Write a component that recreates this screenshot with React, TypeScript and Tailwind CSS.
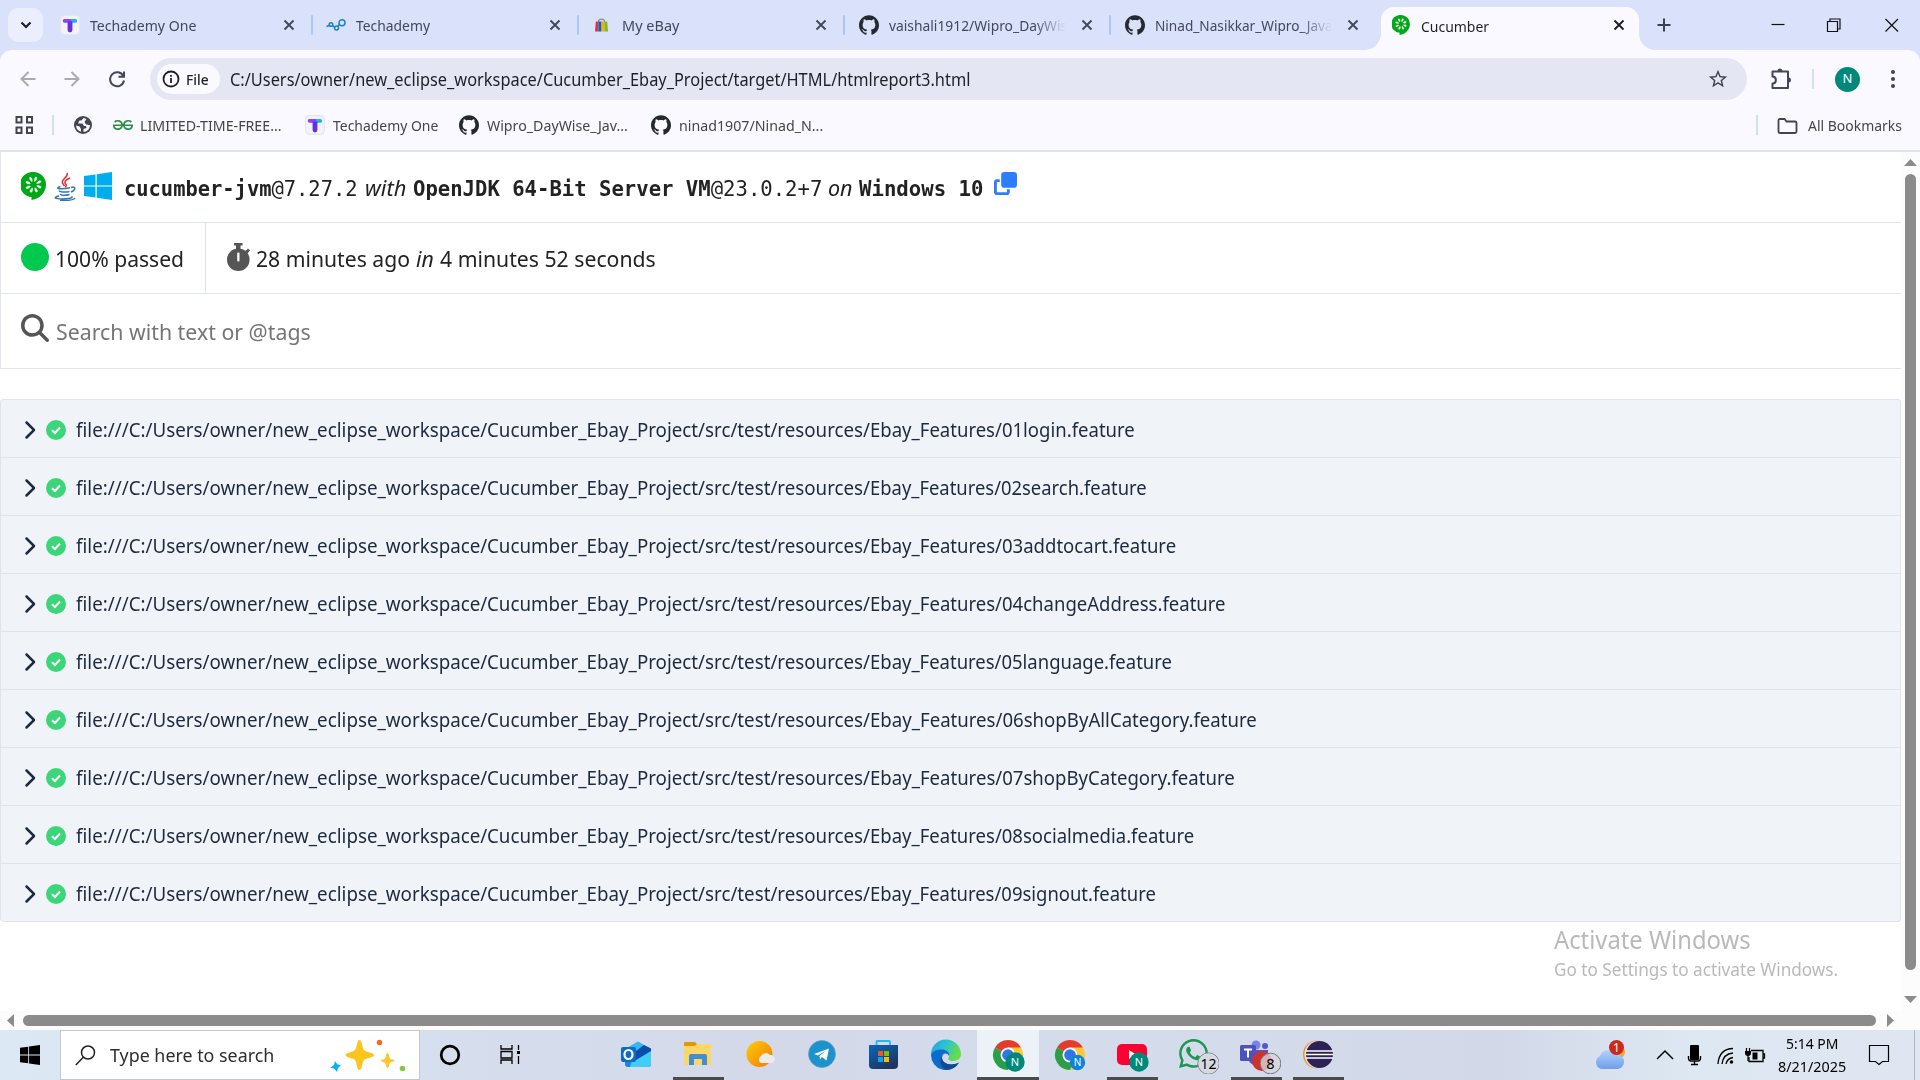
import React, { useLayoutEffect, useRef, useState } from "react";
import { SiGithub, SiGeeksforgeeks } from "react-icons/si";
import { FaMagnifyingGlass, FaClone, FaChevronRight } from "react-icons/fa6";
import { FaWhatsapp } from "react-icons/fa";
import { MdStarBorder } from "react-icons/md";

/** One line of text squeezed or stretched to the width that its class gives. */
function Fit({ className = "", children }: { className?: string; children: React.ReactNode }) {
  const outer = useRef<HTMLSpanElement>(null);
  const inner = useRef<HTMLSpanElement>(null);
  const [scale, setScale] = useState(1);
  useLayoutEffect(() => {
    if (!outer.current || !inner.current) return;
    setScale(outer.current.clientWidth / inner.current.offsetWidth);
  }, []);
  return (
    <span ref={outer} className={`inline-block shrink-0 whitespace-nowrap ${className}`}>
      <span ref={inner} className="inline-block origin-left" style={{ transform: `scaleX(${scale})` }}>
        {children}
      </span>
    </span>
  );
}

const seedAngles = [20, 65, 110, 155, 200, 245, 290, 335];

function Cucumber({ width, height }: { width: number; height: number }) {
  return (
    <svg width={width} height={height} viewBox="0 0 25 28" className="shrink-0">
      <path d="M12.500 0A12.500 12.500 0 0 1 25 12.500C25 20 19 27 10.500 28V25A12.500 12.500 0 0 1 12.500 0Z" fill="#00a818" />
      {seedAngles.map((a) => (
        <path key={a} d="M12.500 9.300C11.200 8 11 4.600 12.500 4.600C14 4.600 13.800 8 12.500 9.300Z" fill="#fff" stroke="#fff" strokeWidth=".4" transform={`rotate(${a} 12.500 12.700)`} />
      ))}
    </svg>
  );
}

function TechademyOne() {
  return (
    <svg width="20" height="20" viewBox="0 0 20 20" className="shrink-0">
      <rect x=".5" y=".5" width="19" height="19" rx="4" fill="#f3f2f4" stroke="#e6e5ea" />
      <path d="M4.500 4H11L13 7.800H4.800A1.9 1.900 0 0 1 4.500 4Z" fill="#8a45f5" />
      <path d="M10.500 4H15.300A1.9 1.900 0 0 1 15.300 7.800H12.500Z" fill="#18b4f5" />
      <path d="M7.600 6.500H12.400V15A2.400 2.400 0 0 1 7.600 15Z" fill="#6432dc" />
    </svg>
  );
}

function Techademy() {
  return (
    <svg width="20" height="12" viewBox="0 0 20 12" className="shrink-0" fill="none" stroke="#1d7fc4" strokeWidth="1.500">
      <path d="M.5 7.500L3 6.500" />
      <circle cx="5" cy="5.500" r="1.800" />
      <path d="M6.500 6.500L9 8.500" />
      <circle cx="10.500" cy="9" r="2" />
      <path d="M11.500 7.500L13.500 5.500" />
      <circle cx="16" cy="3.800" r="3" />
    </svg>
  );
}

function EbayBag() {
  return (
    <svg width="13" height="14" viewBox="0 0 13 14" className="-ml-[2px] shrink-0">
      <path d="M3.500 4C3.500 .2 9.500 .2 9.500 4" fill="none" stroke="#8a8d96" strokeWidth="1.200" />
      <path d="M.8 3.500H3.500V13.500H0Z" fill="#e53238" />
      <path d="M3.500 3.500H6.500V13.500H3.500Z" fill="#0064d2" />
      <path d="M6.500 3.500H9.500V13.500H6.500Z" fill="#f5af02" />
      <path d="M9.500 3.500H12.200L13 13.500H9.500Z" fill="#86b817" />
    </svg>
  );
}

function Cross({ dark }: { dark?: boolean }) {
  return (
    <svg width="12" height="12" viewBox="0 0 12 12" className="shrink-0">
      <path d="M1.500 1.500L10.500 10.500M10.500 1.500L1.500 10.500" stroke={dark ? "#1f1f28" : "#434759"} strokeWidth="1.900" />
    </svg>
  );
}

function Sep() {
  return <div className="h-5 w-[2px] shrink-0 rounded bg-[#a8c7fa]" />;
}

function Tab({ icon, children, sep = true }: { icon: React.ReactNode; children: React.ReactNode; sep?: boolean }) {
  return (
    <div className="flex w-[266px] shrink-0 items-center pl-[13px]">
      <div className="flex w-5 shrink-0 justify-center">{icon}</div>
      <div className="ml-[10px] flex w-[178px] shrink-0 text-[15px] leading-5 text-[#43475a]">{children}</div>
      <div className="ml-[15px]">
        <Cross />
      </div>
      <div className="ml-[16px]">{sep && <Sep />}</div>
    </div>
  );
}

function TabStrip() {
  return (
    <div className="flex h-[50px] shrink-0 items-stretch bg-[#dae1fa]">
      <div className="ml-2 mr-1 mt-2 flex h-[34px] w-[35px] shrink-0 items-center justify-center rounded-[10px] bg-[#ebeffd]">
        <svg width="12" height="8" viewBox="0 0 12 8" fill="none" stroke="#1f1f28" strokeWidth="2.200">
          <path d="M1.500 1.500L6 6L10.500 1.500" />
        </svg>
      </div>
      <Tab icon={<TechademyOne />}>
        <Fit className="w-[106px]">Techademy One</Fit>
      </Tab>
      <Tab icon={<Techademy />}>
        <Fit className="w-[74px]">Techademy</Fit>
      </Tab>
      <Tab icon={<EbayBag />}>
        <Fit className="w-[57px]">My eBay</Fit>
      </Tab>
      <Tab icon={<SiGithub size={20} color="#24292f" className="translate-x-px" />}>
        <span className="[mask-image:linear-gradient(to_right,black_82%,transparent)]">
          <Fit className="w-[178px] pl-px">vaishali1912/Wipro_DayWis</Fit>
        </span>
      </Tab>
      <Tab sep={false} icon={<SiGithub size={20} color="#24292f" className="translate-x-px" />}>
        <span className="[mask-image:linear-gradient(to_right,black_82%,transparent)]">
          <Fit className="w-[178px] pl-px">Ninad_Nasikkar_Wipro_Java</Fit>
        </span>
      </Tab>
      <div className="-ml-[12px] flex w-[290px] shrink-0 items-end">
        <div className="h-4 w-4 bg-[radial-gradient(circle_at_top_left,transparent_15.500px,#faf9ff_16px)]" />
        <div className="flex h-[43px] w-[258px] items-center rounded-t-[13px] bg-[#faf9ff] pb-[7px] pl-[11px]">
          <Cucumber width={18} height={20} />
          <Fit className="ml-[11px] mt-[1px] w-[68px] text-[15px] leading-5 text-[#1f1f28]">Cucumber</Fit>
          <div className="-mt-px ml-[124px] flex">
            <Cross dark />
          </div>
        </div>
        <div className="h-4 w-4 bg-[radial-gradient(circle_at_top_right,transparent_15.500px,#faf9ff_16px)]" />
      </div>
      <svg width="14" height="14" viewBox="0 0 14 14" className="ml-[2px] mt-[18px] shrink-0">
        <path d="M7 .5V13.500M.5 7H13.500" stroke="#3c4152" strokeWidth="2" />
      </svg>
      <div className="ml-auto flex items-center pb-px pr-[21px]">
        <svg width="128" height="16" viewBox="0 0 128 16" fill="none" stroke="#111" strokeWidth="1.200">
          <path d="M.5 7.500H13.500" />
          <path d="M56.500 4.500H66.500V14.500H56.500ZM59 4.500V2H69V12H66.500" />
          <path d="M114.500 2L127 14.500M127 2L114.500 14.500" />
        </svg>
      </div>
    </div>
  );
}

function Toolbar() {
  return (
    <div className="shrink-0 bg-[#dae1fa]">
      <div className="flex h-[51px] items-center rounded-t-xl bg-[#faf9ff] pt-[7px]">
        <svg width="106" height="18" viewBox="0 0 106 18" fill="none" strokeWidth="2" className="ml-5 shrink-0">
          <path d="M15.500 9H1.500M8.500 2L1.500 9L8.500 16" stroke="#a9aab2" />
          <path d="M44.500 9H58.500M51.500 2L58.500 9L51.500 16" stroke="#a9aab2" />
          <path d="M103.300 6A7 7 0 1 0 104 10.500M104 1.500V6.800H98.500" stroke="#434759" />
        </svg>
        <div className="ml-[24px] flex h-[42px] w-[1597px] shrink-0 items-center rounded-full bg-[#e4e7f3] pl-[7px] pr-[18px]">
          <div className="flex h-[30px] w-[63px] items-center rounded-full bg-[#faf9ff] pl-[5px]">
            <svg width="18" height="18" viewBox="0 0 18 18" fill="none" stroke="#1f1f28" strokeWidth="1.800" className="shrink-0">
              <circle cx="9" cy="9" r="7.500" />
              <path d="M9 8V13M9 5V6.800" />
            </svg>
            <Fit className="ml-[6px] w-[23px] text-[15px] font-medium leading-5 text-[#1f1f28]">File</Fit>
          </div>
          <Fit className="ml-[10px] w-[740px] text-[17.500px] text-[#1f1f28]">
            C:/Users/owner/new_eclipse_workspace/Cucumber_Ebay_Project/target/HTML/htmlreport3.html
          </Fit>
          <MdStarBorder className="ml-auto" size={22} color="#43444f" />
        </div>
        <svg width="21" height="22" viewBox="0 0 21 22" className="ml-[24px] shrink-0" fill="none" stroke="#434759" strokeWidth="2">
          <path d="M1.500 3.500H17V20H1.500V15.500C6 15.500 6 8.500 1.500 8.500Z" strokeLinejoin="round" />
          <path d="M6.500 3A2.500 2.500 0 0 1 11.500 3ZM17.500 9.500A2.500 2.500 0 0 1 17.500 14.500Z" fill="#434759" stroke="none" />
        </svg>
        <div className="ml-[20px] h-5 w-[2px] bg-[#d0dffb]" />
        <div className="ml-[21px] flex size-[25px] items-center justify-center rounded-full bg-[#00897b] text-[13px] text-white">N</div>
        <svg width="6" height="20" viewBox="0 0 6 20" fill="#43444f" className="ml-[30px]">
          <circle cx="3" cy="3" r="2" />
          <circle cx="3" cy="10" r="2" />
          <circle cx="3" cy="17" r="2" />
        </svg>
      </div>
    </div>
  );
}

function Bookmarks() {
  return (
    <div className="flex h-[49px] shrink-0 items-center bg-[#faf9ff] pb-[2px] text-[15px] leading-5 text-[#43444f]">
      <svg width="19" height="18" viewBox="0 0 19 18" fill="none" stroke="#43444f" strokeWidth="2" className="ml-[15px] mt-px shrink-0">
        <path d="M1.500 1H6.500V6.500H1.500ZM12 1H17V6.500H12ZM1.500 11.500H6.500V17H1.500ZM12 11.500H17V17H12Z" />
      </svg>
      <div className="ml-[18px] h-5 w-[2px] bg-[#d0dffb]" />
      <svg width="18" height="18" viewBox="0 0 18 18" className="ml-[20px] shrink-0">
        <circle cx="9" cy="9" r="9" fill="#43444f" />
        <path d="M9.500 2L7.500 4.500H5.500L4 7.500H8.500L10 10H12L12.500 12L9.500 13V16C13 16 16 13 16 9C14.500 9.500 13.500 8.500 12 8.500L10.500 6L12.500 3Z" fill="#faf9ff" />
        <path d="M2 9.500L5.500 10.500L7 13V15.700A7 7 0 0 1 2 9.500Z" fill="#faf9ff" />
      </svg>
      <SiGeeksforgeeks size={20} color="#2f8d46" className="ml-[21px] shrink-0" />
      <Fit className="ml-[7px] w-[142px]">LIMITED-TIME-FREE...</Fit>
      <div className="ml-[23px]">
        <TechademyOne />
      </div>
      <Fit className="ml-[8px] w-[105px]">Techademy One</Fit>
      <SiGithub size={20} color="#24292f" className="ml-[21px] shrink-0" />
      <Fit className="ml-[8px] w-[141px]">Wipro_DayWise_Jav...</Fit>
      <SiGithub size={20} color="#24292f" className="ml-[23px] shrink-0" />
      <Fit className="ml-[8px] w-[144px]">ninad1907/Ninad_N...</Fit>
      <div className="ml-auto h-5 w-[2px] bg-[#d0dffb]" />
      <svg width="21" height="16" viewBox="0 0 21 16" fill="none" stroke="#43444f" strokeWidth="1.800" className="ml-[19px] mt-0.5">
        <path d="M1.500 2.500Q1.500 1 3 1H7.500L9.500 3.500H18Q19.500 3.500 19.500 5V13.500Q19.500 15 18 15H3Q1.500 15 1.500 13.500Z" />
      </svg>
      <Fit className="ml-[10px] mr-[18px] w-[94px]">All Bookmarks</Fit>
    </div>
  );
}

function Java() {
  return (
    <svg width="22" height="29" viewBox="0 0 22 29" fill="none" className="shrink-0">
      <path d="M13 1C15 5 6.500 7.500 8.500 11C9 12 10 13 10.300 14M16 6C11 8 9.500 10 12 12.500C12.700 13.200 12 14.500 11 15" stroke="#e32c2e" strokeWidth="1.500" />
      <path
        d="M6.500 14.500C-1 17 8 17.500 16 15.800M5.500 18.500C4 20 11 20.500 15.500 19.500M6.500 21.800C6 23.500 11.500 23.800 15.500 22.500M17 15.500C22.500 13.500 21.500 18.500 17 20M5 24C-1.500 25.500 1 27 8 27C14 27 20 26 17.500 24.300M6 28.300C13 29 20 28 21 26"
        stroke="#3174b9"
        strokeWidth="1.400"
      />
    </svg>
  );
}

function Stopwatch() {
  return (
    <svg width="23" height="28" viewBox="0 0 23 28" className="ml-[21px] mt-[20px] shrink-0">
      <path d="M7 0H15.500V2.500H13.500V6H9V2.500H7Z" fill="#555" />
      <path d="M18 8.500L21 5.500L23 7.500L20 11Z" fill="#555" />
      <circle cx="11.300" cy="16.700" r="11.300" fill="#555" />
      <rect x="10.200" y="9.500" width="2.300" height="9" rx="1" fill="#fff" />
    </svg>
  );
}

function WindowsLogo({ size, color }: { size: number; color: string }) {
  return (
    <svg width={size} height={size} viewBox="0 0 28 28" fill={color} className="shrink-0">
      <path d="M0 4L11.500 2.400V13.400H0ZM12.700 2.200L28 0V13.400H12.700ZM0 14.600H11.500V25.600L0 24ZM12.700 14.600H28V28L12.700 25.800Z" />
    </svg>
  );
}

const features = [
  { name: "01login", width: "w-[265px]" },
  { name: "02search", width: "w-[277px]" },
  { name: "03addtocart", width: "w-[306px]" },
  { name: "04changeAddress", width: "w-[356px]" },
  { name: "05language", width: "w-[302px]" },
  { name: "06shopByAllCategory", width: "w-[387px]" },
  { name: "07shopByCategory", width: "w-[365px]" },
  { name: "08socialmedia", width: "w-[324px]" },
  { name: "09signout", width: "w-[286px]" },
];

function Report() {
  const mono = "font-['DejaVu_Sans_Mono',monospace] text-[20.500px]";
  return (
    <div className="flex w-[1901px] flex-col text-[22.400px] text-[#222]">
      <div className="flex h-[71px] border-b border-l border-[#dfe5f0] pl-[20px] pt-[20px]">
        <Cucumber width={25} height={28} />
        <div className="ml-[8px]">
          <Java />
        </div>
        <div className="ml-[8px]">
          <WindowsLogo size={28} color="#00adef" />
        </div>
        <div className="-mt-px ml-[12px] flex h-[34px] items-baseline leading-[34px]">
          <Fit className={`w-[234px] ${mono}`}>
            <b>cucumber-jvm</b>@7.27.2
          </Fit>
          <Fit className="ml-[7px] w-[41px] italic">with</Fit>
          <Fit className={`ml-[7px] w-[409px] ${mono}`}>
            <b>OpenJDK 64-Bit Server VM</b>@23.0.2+7
          </Fit>
          <Fit className="ml-[6px] w-[25px] italic">on</Fit>
          <Fit className={`ml-[6px] w-[124px] ${mono}`}>
            <b>Windows 10</b>
          </Fit>
        </div>
        <FaClone size={23} color="#2b7fff" className="ml-[11px]" />
      </div>
      <div className="flex h-[71px] border-b border-l border-[#dfe5f0]">
        <div className="flex w-[205px] border-r border-[#dfe5f0] pl-[20px] pt-[20px]">
          <div className="size-[28px] rounded-full bg-[#00c950]" />
          <Fit className="ml-[6px] w-[129px] leading-[32px]">100% passed</Fit>
        </div>
        <Stopwatch />
        <div className="ml-[6px] flex items-baseline pt-[20px] leading-[32px]">
          <Fit className="w-[154px]">28 minutes ago</Fit>
          <Fit className="ml-[6px] w-[18px] italic">in</Fit>
          <Fit className="ml-[6px] w-[216px]">4 minutes 52 seconds</Fit>
        </div>
      </div>
      <div className="flex h-[75px] border-b border-l border-[#dfe5f0] pl-[20px] pt-[20px]">
        <FaMagnifyingGlass size={28} color="#555" />
        <Fit className="ml-[7px] w-[255px] leading-[36px] text-[#757575]">Search with text or @tags</Fit>
      </div>
      <div className="mt-[30px] flex flex-col rounded-[3px] border border-[#dfe5f0] bg-[#f0f4f9] text-[20px] text-[#1d293d]">
        {features.map((f, i) => (
          <div
            key={f.name}
            className={`flex h-[58px] items-center pl-[18px] pt-0.5 last:h-[57px] ${i < features.length - 1 ? "border-b border-[#dfe3ec]" : ""}`}
          >
            <FaChevronRight size={20} color="#1d293d" className="shrink-0" />
            <svg width="20" height="20" viewBox="0 0 20 20" className="ml-[7px] shrink-0">
              <circle cx="10" cy="10" r="10" fill="#3cd57a" />
              <path d="M6 10.300L8.900 13L14 7.500" fill="none" stroke="#fff" strokeWidth="2" />
            </svg>
            <Fit className="ml-[10px] w-[411px]">file:///C:/Users/owner/new_eclipse_workspace/</Fit>
            <Fit className="w-[383px]">Cucumber_Ebay_Project/src/test/resources/</Fit>
            <Fit className={f.width}>Ebay_Features/{f.name}.feature</Fit>
          </div>
        ))}
      </div>
      <div className="-mt-px ml-[1554px] flex flex-col text-[#b9b9b9]">
        <Fit className="w-[197px] text-[25px] leading-[36px]">Activate Windows</Fit>
        <Fit className="w-[284px] text-[18px] leading-[24px]">Go to Settings to activate Windows.</Fit>
      </div>
    </div>
  );
}

function Chrome({ children }: { children?: React.ReactNode }) {
  return (
    <svg width="34" height="34" viewBox="0 0 34 34">
      <path d="M17 17L4 9.500A15 15 0 0 1 30 9.500Z" fill="#e33b2e" />
      <path d="M17 17L4 9.500A15 15 0 0 0 17 32L24 19Z" fill="#2c9e47" />
      <path d="M17 17L17 9.500H30A15 15 0 0 1 17 32L23 20Z" fill="#fcc934" />
      <circle cx="17" cy="17" r="7.500" fill="#fff" />
      <circle cx="17" cy="17" r="5.800" fill="#2f77e8" />
      {children}
    </svg>
  );
}

function Badge({ cx, cy, r, fill, label, size, color = "#fff", stroke }: { cx: number; cy: number; r: number; fill: string; label: string; size: number; color?: string; stroke?: string }) {
  return (
    <g>
      <circle cx={cx} cy={cy} r={r} fill={fill} stroke={stroke} />
      <text x={cx} y={cy + size * 0.36} textAnchor="middle" fontSize={size} fill={color} stroke="none">
        {label}
      </text>
    </g>
  );
}

const apps: { id: string; open?: boolean; active?: boolean; icon: React.ReactNode }[] = [
  {
    id: "outlook",
    icon: (
      <svg width="32" height="32" viewBox="0 0 32 32">
        <path d="M5 10L18 3L31 10V25Q31 28 28 28H8Q5 28 5 25Z" fill="#1a86d8" />
        <path d="M7 9L18 2.500L24 6L13 14Z" fill="#35b8f1" />
        <path d="M12 21L31 10V25Q31 28 28 28H10Z" fill="#41cdf5" />
        <path d="M14 14L24 6L31 9.500V12L16 21Z" fill="#0c4cab" />
        <rect x="1" y="8" width="15" height="15" rx="2" fill="#0f6cc4" />
        <ellipse cx="8.500" cy="15.500" rx="4" ry="4.500" fill="none" stroke="#fff" strokeWidth="2.200" />
      </svg>
    ),
  },
  {
    id: "files",
    open: true,
    icon: (
      <svg width="32" height="32" viewBox="0 0 32 32">
        <path d="M2 4Q2 3 3 3H13L15 5V7H2Z" fill="#dd9a05" />
        <path d="M2 7H13L15 5H29V26H2Z" fill="#fcd667" />
        <path d="M7 26V17Q7 15 9 15H23Q25 15 25 17V26H20V20H12V26Z" fill="#3f8fd6" />
      </svg>
    ),
  },
  {
    id: "weather",
    icon: (
      <svg width="32" height="32" viewBox="0 0 32 32">
        <defs>
          <linearGradient id="sun" x2="1" y2="1">
            <stop stopColor="#ffcb05" />
            <stop offset="1" stopColor="#f07b05" />
          </linearGradient>
        </defs>
        <circle cx="15.500" cy="15" r="13" fill="url(#sun)" />
        <path d="M17 24A4 4 0 0 1 17 17A5.500 5.500 0 0 1 26 16A4 4 0 0 1 27 24Z" fill="#ececee" />
      </svg>
    ),
  },
  {
    id: "telegram",
    icon: (
      <svg width="32" height="32" viewBox="0 0 32 32">
        <circle cx="16" cy="15" r="13.500" fill="#1c93ce" stroke="#6a98b5" strokeWidth=".6" />
        <path d="M8 15L23 9.500L20.500 21.500L16 18L14 20.500L13.500 17L20 11.500L12 16.500Z" fill="#fff" />
      </svg>
    ),
  },
  {
    id: "store",
    icon: (
      <svg width="32" height="32" viewBox="0 0 32 32">
        <defs>
          <linearGradient id="bag" x2=".6" y2="1">
            <stop stopColor="#0767bd" />
            <stop offset="1" stopColor="#20345d" />
          </linearGradient>
        </defs>
        <path d="M8.500 7V3Q8.500 2 9.500 2H21Q22 2 22 3V7" fill="none" stroke="#29b4f0" strokeWidth="1.800" />
        <path d="M1 6H30V26Q30 30 26 30H5Q1 30 1 26Z" fill="url(#bag)" />
        <path d="M10 12H15V17H10Z" fill="#f35325" />
        <path d="M16 12H21V17H16Z" fill="#81bc06" />
        <path d="M10 18H15V23H10Z" fill="#05a6f0" />
        <path d="M16 18H21V23H16Z" fill="#ffba08" />
      </svg>
    ),
  },
  {
    id: "edge",
    icon: (
      <svg width="32" height="32" viewBox="0 0 32 32">
        <defs>
          <linearGradient id="edgeTop" x2="1" y2=".4">
            <stop stopColor="#1f9fe0" />
            <stop offset=".5" stopColor="#2cc3d2" />
            <stop offset="1" stopColor="#66dd4b" />
          </linearGradient>
        </defs>
        <path d="M1 16A15 15 0 0 1 31 15C31 20 27 22 23 22C19 22 17 20 19 18C20 14 17 11 13 11C7 11 2 13 1 16Z" fill="url(#edgeTop)" />
        <path d="M1 16C2 12 7 10.500 12 10.500C17 10.500 20 14 19 17C18 14 12 13 12 19C12 24 20 28 29 23.500A15 15 0 0 1 1 16Z" fill="#0c6ccb" />
        <path d="M12 19C12 24 20 28 29 23.500A15 15 0 0 1 17 31C10 29 8 20 14 15.500C12.500 16.500 12 17.500 12 19Z" fill="#13498f" />
      </svg>
    ),
  },
  { id: "chrome", open: true, active: true, icon: <Chrome><Badge cx={24} cy={24} r={9.7} fill="#00897b" label="N" size={11} /></Chrome> },
  { id: "chrome-alt", icon: <Chrome><Badge cx={24.500} cy={24.500} r={7.7} fill="#0f84d6" label="N" size={10} /></Chrome> },
  {
    id: "youtube",
    open: true,
    icon: (
      <svg width="34" height="34" viewBox="0 0 34 34">
        <rect x="2" y="6" width="30" height="21" rx="5" fill="#ff0033" />
        <path d="M14 12L21 16.500L14 21Z" fill="#fff" />
        <Badge cx={24} cy={24} r={9.7} fill="#00897b" label="N" size={11} />
      </svg>
    ),
  },
  {
    id: "whatsapp",
    icon: (
      <svg width="50" height="38" viewBox="0 0 50 38">
        <FaWhatsapp x="8" y="1" size={33} color="#1f9552" />
        <Badge cx={39.500} cy={27.500} r={10.7} fill="#d6d9e2" stroke="#8b8d92" label="12" size={14} color="#000" />
      </svg>
    ),
  },
  {
    id: "teams",
    open: true,
    icon: (
      <svg width="50" height="38" viewBox="0 0 50 38">
        <circle cx="25" cy="9" r="4.500" fill="#7b83eb" />
        <circle cx="34" cy="10" r="3" fill="#5059c9" />
        <path d="M17 14H37V21Q37 28 30 29H23Q17 27 17 21Z" fill="#5059c9" />
        <rect x="9" y="9" width="16" height="16" rx="1.500" fill="#4b53bc" />
        <path d="M13 13.500H21M17 13.500V21.500" stroke="#fff" strokeWidth="2" />
        <circle cx="31" cy="25" r="10" fill="#cd322c" />
        <Badge cx={39.500} cy={27.500} r={10.3} fill="#d7d4dccc" stroke="#777" label="8" size={14.5} color="#000" />
      </svg>
    ),
  },
  {
    id: "eclipse",
    open: true,
    icon: (
      <svg width="34" height="34" viewBox="0 0 34 34">
        <circle cx="16" cy="16.500" r="14" fill="#f7941e" />
        <circle cx="17.500" cy="16.500" r="14" fill="#dfe2f0" />
        <circle cx="18.500" cy="16.500" r="13.500" fill="#2c2255" />
        <path d="M5 13H32M4.500 16.500H32.500M5 20H32" stroke="#fff" strokeWidth="1.600" />
      </svg>
    ),
  },
];

function Taskbar() {
  return (
    <div className="flex h-[50px] shrink-0 bg-[linear-gradient(90deg,#dce9f4_0,#d5ddec_26%,#d4d9ea_40%,#d4dcec_60%,#d2d8e8_78%,#dde8f2_88%,#dfe5f1_100%)]">
      <div className="flex w-[60px] shrink-0 items-center justify-center">
        <WindowsLogo size={20} color="#000" />
      </div>
      <div className="flex h-[50px] w-[360px] shrink-0 items-center border border-[#c6c7c9] bg-white pl-[14px]">
        <svg width="21" height="21" viewBox="0 0 21 21" fill="none" stroke="#222" strokeWidth="1.500" className="shrink-0">
          <circle cx="13" cy="7.500" r="6.500" />
          <path d="M8.500 12L.8 20" />
        </svg>
        <Fit className="ml-[14px] w-[164px] text-[18.500px] text-[#2d2d2d]">Type here to search</Fit>
        <svg width="78" height="34" viewBox="0 0 78 34" className="-mt-px ml-[55px] shrink-0">
          <path d="M30.500 2C33 2 33 9 35 12C37 14.500 45 14.500 45 17C45 19.500 37 20 35 22C33 25 33 32 30.500 32C28 32 28 25 26 22C24 20 16.500 19.500 16.500 17C16.500 14.500 24 14.500 26 12C28 9 28 2 30.500 2Z" fill="#fdc51c" />
          <path d="M58.500 15C60 15 60 19 61 20.500C62 22 65.500 21 65.500 22.500C65.500 24 62 23.500 61 25C60 26 60 30 58.500 30C57 30 57 26 56 25C55 23.500 52 24 52 22.500C52 21 55 22 56 20.500C57 19 57 15 58.500 15Z" fill="#fcc62e" />
          <path d="M6 23L8.500 26.500L12 27L9 30L8 34L5 30.500L1 30L5 27Z" fill="#0bb0f2" />
          <circle cx="50.500" cy="4.500" r="2.800" fill="#f26a2c" />
          <circle cx="73.500" cy="30.500" r="2.800" fill="#84c83d" />
        </svg>
      </div>
      <svg width="102" height="50" viewBox="0 0 102 50" fill="none" stroke="#000" className="shrink-0">
        <circle cx="30" cy="25" r="8.800" strokeWidth="2.700" />
        <path d="M81 15V19H92V15M81 34V30H92V34M81 21.500H92V28H81ZM98.500 15V20M98.500 26V34" strokeWidth="1.300" />
        <path d="M97 21H100V24H97Z" fill="#000" stroke="none" />
      </svg>
      <div className="ml-[83px] flex">
        {apps.map((app) => (
          <div key={app.id} className={`flex w-[62px] flex-col items-center ${app.active ? "bg-[#edf1f8]" : ""}`}>
            <div className="flex h-[47px] items-center justify-center pt-[3px]">{app.icon}</div>
            {app.open && <div className={`h-[3px] bg-[#4a4b4b] ${app.active ? "w-full" : "w-[51px]"}`} />}
          </div>
        ))}
      </div>
      <svg width="185" height="50" viewBox="0 0 185 50" fill="none" stroke="#000" className="ml-auto shrink-0">
        <defs>
          <linearGradient id="cloud" x2="0" y2="1">
            <stop stopColor="#b3d2fb" />
            <stop offset="1" stopColor="#6e9fe8" />
          </linearGradient>
        </defs>
        <circle cx="30" cy="22" r="6" fill="#f5a623" stroke="none" />
        <path d="M12 39A7 7 0 0 1 11 26A9.500 9.500 0 0 1 28 24.500A7.300 7.300 0 0 1 29 39Z" fill="url(#cloud)" stroke="none" />
        <g stroke="none">
          <Badge cx={27.500} cy={17.500} r={7.5} fill="#c92a1d" label="1" size={12} />
        </g>
        <path d="M68 29L76 21L84 29" strokeWidth="1.500" />
        <rect x="101" y="15" width="9" height="15" rx="1" fill="#000" stroke="none" />
        <path d="M99.500 26V28Q99.500 31 102 31H109Q111.500 31 111.500 28V26M105.500 31V34.500M102 34.500H109" strokeWidth="1.400" />
        <path d="M129 34Q130 19 144 18.500M133 34Q134 24 144 23M137 34Q138 28.500 144 27.500" strokeWidth="1.300" />
        <circle cx="142.500" cy="32" r="1.800" fill="#000" stroke="none" />
        <path d="M162 20.500H174V31.500H160V27M174 24H175.500V28H174" strokeWidth="1.300" />
        <path d="M163.500 22.500H168.500V29.500H163.500ZM156 21H162V23Q162 26 159 26Q156 26 156 23Z" fill="#000" stroke="none" />
        <path d="M157.500 18V21M160.500 18V21M159 25V31" strokeWidth="1.200" />
      </svg>
      <div className="flex w-[75px] shrink-0 flex-col items-center pt-[2px] text-[15px] leading-[23px] text-black">
        <Fit className="w-[52px]">5:14 PM</Fit>
        <Fit className="w-[68px]">8/21/2025</Fit>
      </div>
      <svg width="71" height="50" viewBox="0 0 71 50" fill="none" stroke="#000" className="shrink-0">
        <path d="M20.500 15.500H39.500V31.500H33.500L30 34.500L26.500 31.500H20.500Z" strokeWidth="1.200" />
        <path d="M65.500 0V50" stroke="#b3bac3" />
      </svg>
    </div>
  );
}

export default function App() {
  return (
    <div className="flex h-[1080px] w-[1920px] flex-col overflow-hidden bg-white font-['Noto_Sans','Open_Sans',sans-serif]">
      <TabStrip />
      <Toolbar />
      <Bookmarks />
      <div className="h-[2px] shrink-0 bg-[#dfe3f0]" />
      <div className="flex h-[859px] shrink-0">
        <Report />
        <div className="flex w-[19px] flex-col items-center bg-[#fcfcfc] pb-2 pt-[7px]">
          <svg width="13" height="7" viewBox="0 0 13 7" fill="#8b8b8b">
            <path d="M6.500 0L13 7H0Z" />
          </svg>
          <div className="mt-2 h-[796px] w-[11px] rounded-full bg-[#8b8b8b]" />
          <svg width="13" height="7" viewBox="0 0 13 7" fill="#8b8b8b" className="mt-auto">
            <path d="M0 0H13L6.500 7Z" />
          </svg>
        </div>
      </div>
      <div className="flex h-[19px] shrink-0 items-center bg-[#fcfcfc]">
        <svg width="7" height="13" viewBox="0 0 7 13" fill="#8b8b8b" className="ml-[7px]">
          <path d="M7 0V13L0 6.500Z" />
        </svg>
        <div className="ml-[9px] h-[11px] w-[1853px] rounded-full bg-[#8b8b8b]" />
        <svg width="7" height="13" viewBox="0 0 7 13" fill="#8b8b8b" className="ml-[11px]">
          <path d="M0 0L7 6.500L0 13Z" />
        </svg>
      </div>
      <Taskbar />
    </div>
  );
}
